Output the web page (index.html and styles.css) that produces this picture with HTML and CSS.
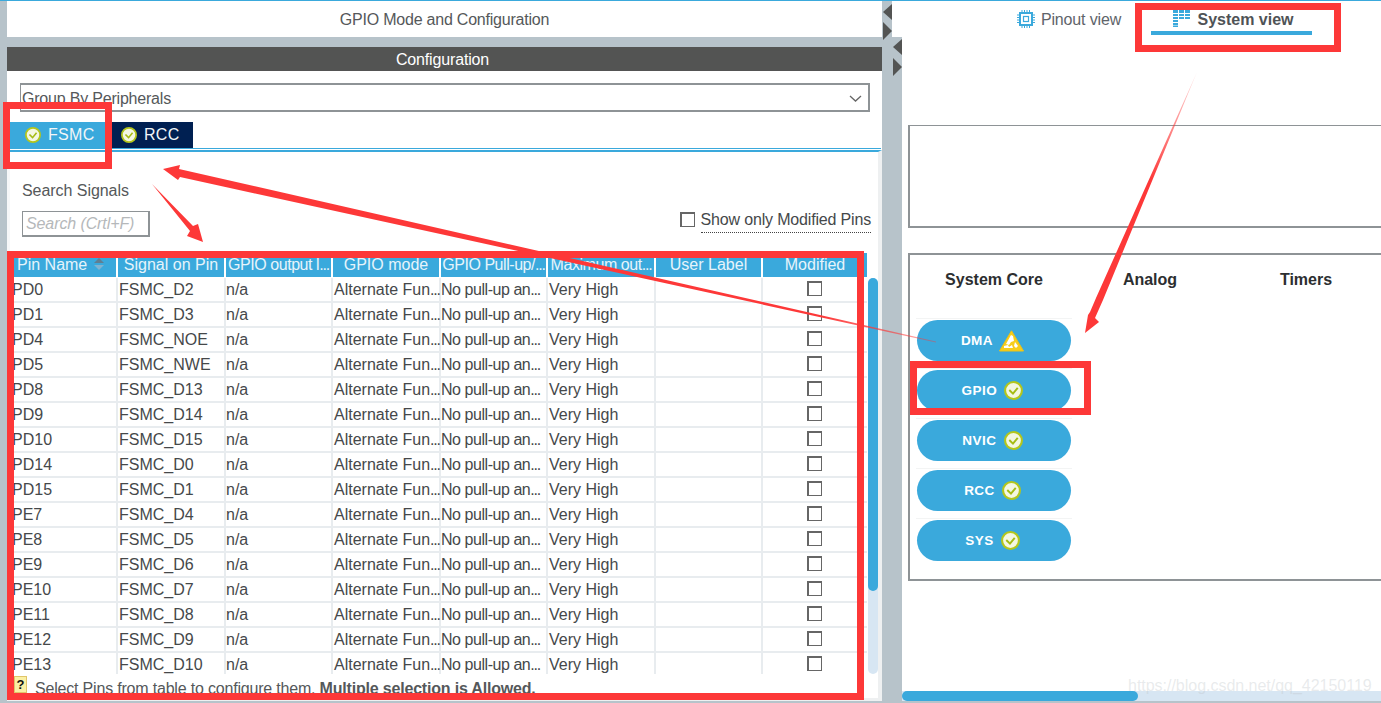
FILE: index.html
```html
<!DOCTYPE html>
<html lang="en">
<head>
<meta charset="utf-8">
<title>GPIO Mode and Configuration</title>
<link rel="stylesheet" href="styles.css">
</head>
<body>
<div class="app">
  <section class="left">
    <header class="mode-header">GPIO Mode and Configuration</header>
    <div class="config-title">Configuration</div>
    <div class="config-body">
      <div class="select">
        <span>Group By Peripherals</span>
        <svg class="chevron" width="13" height="7" viewBox="0 0 13 7"><path d="M1 1l5.500 5L12 1" fill="none" stroke="#666" stroke-width="1.300"/></svg>
      </div>
      <div class="tabs">
        <div class="tab tab-active">
          <svg class="check" viewBox="0 0 18 18"><circle cx="9" cy="9" r="8" fill="#f4f7e2" stroke="#b4c61c" stroke-width="2"/><path d="M5 8.500l3.500 3.500L13 6.500" fill="none" stroke="#a5bb14" stroke-width="1.800"/></svg>
          <span>FSMC</span>
        </div>
        <div class="tab tab-dark">
          <svg class="check" viewBox="0 0 18 18"><circle cx="9" cy="9" r="8" fill="#f4f7e2" stroke="#b4c61c" stroke-width="2"/><path d="M5 8.500l3.500 3.500L13 6.500" fill="none" stroke="#a5bb14" stroke-width="1.800"/></svg>
          <span>RCC</span>
        </div>
      </div>
      <div class="signals">
        <div class="search-row">
          <div class="search-col">
            <div class="search-label">Search Signals</div>
            <div class="search-input">Search (Crtl+F)</div>
          </div>
          <div class="modified-filter">
            <span class="checkbox"></span>
            <span class="modified-text">Show only Modified Pins</span>
          </div>
        </div>
        <div class="table-row">
          <div class="table-clip">
            <table class="pins">
              <colgroup>
                <col class="c107"><col class="c108"><col class="c107"><col class="c108"><col class="c107"><col class="c108"><col class="c107"><col class="c104">
              </colgroup>
              <thead>
                <tr>
                  <th class="th-first">Pin Name
                    <svg class="sort" width="12" height="14" viewBox="0 0 12 14"><path d="M6 1l5 5H1z" fill="#5f7f92"/><path d="M6 13l5-5H1z" fill="#7fb3d0"/></svg>
                  </th>
                  <th>Signal on Pin</th><th>GPIO output l<i class="dots">...</i></th><th>GPIO mode</th><th>GPIO Pull-up/<i class="dots">...</i></th><th>Maximum out<i class="dots">...</i></th><th>User Label</th><th>Modified</th>
                </tr>
              </thead>
              <tbody>
                <tr><td class="td-first">PD0</td><td>FSMC_D2</td><td>n/a</td><td>Alternate Fun<i class="dots">...</i></td><td>No pull-up an<i class="dots">...</i></td><td>Very High</td><td></td><td class="td-check"><span class="checkbox"></span></td></tr>
                <tr><td class="td-first">PD1</td><td>FSMC_D3</td><td>n/a</td><td>Alternate Fun<i class="dots">...</i></td><td>No pull-up an<i class="dots">...</i></td><td>Very High</td><td></td><td class="td-check"><span class="checkbox"></span></td></tr>
                <tr><td class="td-first">PD4</td><td>FSMC_NOE</td><td>n/a</td><td>Alternate Fun<i class="dots">...</i></td><td>No pull-up an<i class="dots">...</i></td><td>Very High</td><td></td><td class="td-check"><span class="checkbox"></span></td></tr>
                <tr><td class="td-first">PD5</td><td>FSMC_NWE</td><td>n/a</td><td>Alternate Fun<i class="dots">...</i></td><td>No pull-up an<i class="dots">...</i></td><td>Very High</td><td></td><td class="td-check"><span class="checkbox"></span></td></tr>
                <tr><td class="td-first">PD8</td><td>FSMC_D13</td><td>n/a</td><td>Alternate Fun<i class="dots">...</i></td><td>No pull-up an<i class="dots">...</i></td><td>Very High</td><td></td><td class="td-check"><span class="checkbox"></span></td></tr>
                <tr><td class="td-first">PD9</td><td>FSMC_D14</td><td>n/a</td><td>Alternate Fun<i class="dots">...</i></td><td>No pull-up an<i class="dots">...</i></td><td>Very High</td><td></td><td class="td-check"><span class="checkbox"></span></td></tr>
                <tr><td class="td-first">PD10</td><td>FSMC_D15</td><td>n/a</td><td>Alternate Fun<i class="dots">...</i></td><td>No pull-up an<i class="dots">...</i></td><td>Very High</td><td></td><td class="td-check"><span class="checkbox"></span></td></tr>
                <tr><td class="td-first">PD14</td><td>FSMC_D0</td><td>n/a</td><td>Alternate Fun<i class="dots">...</i></td><td>No pull-up an<i class="dots">...</i></td><td>Very High</td><td></td><td class="td-check"><span class="checkbox"></span></td></tr>
                <tr><td class="td-first">PD15</td><td>FSMC_D1</td><td>n/a</td><td>Alternate Fun<i class="dots">...</i></td><td>No pull-up an<i class="dots">...</i></td><td>Very High</td><td></td><td class="td-check"><span class="checkbox"></span></td></tr>
                <tr><td class="td-first">PE7</td><td>FSMC_D4</td><td>n/a</td><td>Alternate Fun<i class="dots">...</i></td><td>No pull-up an<i class="dots">...</i></td><td>Very High</td><td></td><td class="td-check"><span class="checkbox"></span></td></tr>
                <tr><td class="td-first">PE8</td><td>FSMC_D5</td><td>n/a</td><td>Alternate Fun<i class="dots">...</i></td><td>No pull-up an<i class="dots">...</i></td><td>Very High</td><td></td><td class="td-check"><span class="checkbox"></span></td></tr>
                <tr><td class="td-first">PE9</td><td>FSMC_D6</td><td>n/a</td><td>Alternate Fun<i class="dots">...</i></td><td>No pull-up an<i class="dots">...</i></td><td>Very High</td><td></td><td class="td-check"><span class="checkbox"></span></td></tr>
                <tr><td class="td-first">PE10</td><td>FSMC_D7</td><td>n/a</td><td>Alternate Fun<i class="dots">...</i></td><td>No pull-up an<i class="dots">...</i></td><td>Very High</td><td></td><td class="td-check"><span class="checkbox"></span></td></tr>
                <tr><td class="td-first">PE11</td><td>FSMC_D8</td><td>n/a</td><td>Alternate Fun<i class="dots">...</i></td><td>No pull-up an<i class="dots">...</i></td><td>Very High</td><td></td><td class="td-check"><span class="checkbox"></span></td></tr>
                <tr><td class="td-first">PE12</td><td>FSMC_D9</td><td>n/a</td><td>Alternate Fun<i class="dots">...</i></td><td>No pull-up an<i class="dots">...</i></td><td>Very High</td><td></td><td class="td-check"><span class="checkbox"></span></td></tr>
                <tr><td class="td-first">PE13</td><td>FSMC_D10</td><td>n/a</td><td>Alternate Fun<i class="dots">...</i></td><td>No pull-up an<i class="dots">...</i></td><td>Very High</td><td></td><td class="td-check"><span class="checkbox"></span></td></tr>
              </tbody>
            </table>
          </div>
          <div class="vscroll"><div class="vthumb"></div></div>
        </div>
        <div class="hint">
          <span class="hint-icon">?</span>
          <span class="hint-text">Select Pins from table to configure them. <b>Multiple selection is Allowed.</b></span>
        </div>
      </div>
    </div>
  </section>

  <section class="right">
    <nav class="views">
      <div class="view view-plain">
        <svg class="view-icon" width="18" height="18" viewBox="0 0 18 18"><g fill="none" stroke="#3aa9dc"><rect x="3" y="3" width="12" height="12" stroke-width="2"/><rect x="6.500" y="6.500" width="5" height="5" stroke-width="1.200"/><path d="M0 5h3M0 7.500h3M0 10h3M0 12.500h3M15 5h3M15 7.500h3M15 10h3M15 12.500h3M5 0v3M7.500 0v3M10 0v3M12.500 0v3M5 15v3M7.500 15v3M10 15v3M12.500 15v3" stroke-width="1"/></g></svg>
        <span>Pinout view</span>
      </div>
      <div class="view view-active">
        <svg class="view-icon" width="18" height="17" viewBox="0 0 18 17"><g fill="#3aa9dc"><rect x="0" y="0" width="5" height="3"/><rect x="6" y="0" width="5" height="3"/><rect x="12" y="0" width="5" height="3"/><rect x="0" y="4" width="5" height="2"/><rect x="6" y="4" width="5" height="2"/><rect x="12" y="4" width="5" height="2"/><rect x="0" y="7" width="5" height="2"/><rect x="6" y="7" width="5" height="2"/><rect x="12" y="7" width="5" height="2"/><rect x="0" y="10" width="5" height="2"/><rect x="0" y="13" width="5" height="2"/><rect x="0" y="15.500" width="5" height="1.500"/></g></svg>
        <span>System view</span>
      </div>
    </nav>
    <div class="system">
      <div class="empty-box"></div>
      <div class="categories">
        <div class="category">
          <h3 class="category-title">System Core</h3>
          <div class="pill-item"><div class="pill"><span>DMA</span>
            <svg class="warn" width="25" height="22" viewBox="0 0 25 22"><path d="M12.500.8L24.500 21H.5z" fill="#f6cd1c" stroke="#eec214" stroke-width="1"/><path d="M12 5l2 1 1 5-3 1-2 3-3-1zM5 16l4-1 1 2 3-2 1 3H5zM16 12l3 4-2 2-2-2z" fill="#fff"/></svg>
          </div></div>
          <div class="pill-item"><div class="pill"><span>GPIO</span>
            <svg class="check-lg" viewBox="0 0 18 18"><circle cx="9" cy="9" r="8" fill="#f4f7e2" stroke="#b4c61c" stroke-width="2"/><path d="M5 8.500l3.500 3.500L13 6.500" fill="none" stroke="#a5bb14" stroke-width="1.800"/></svg>
          </div></div>
          <div class="pill-item"><div class="pill"><span>NVIC</span>
            <svg class="check-lg" viewBox="0 0 18 18"><circle cx="9" cy="9" r="8" fill="#f4f7e2" stroke="#b4c61c" stroke-width="2"/><path d="M5 8.500l3.500 3.500L13 6.500" fill="none" stroke="#a5bb14" stroke-width="1.800"/></svg>
          </div></div>
          <div class="pill-item"><div class="pill"><span>RCC</span>
            <svg class="check-lg" viewBox="0 0 18 18"><circle cx="9" cy="9" r="8" fill="#f4f7e2" stroke="#b4c61c" stroke-width="2"/><path d="M5 8.500l3.500 3.500L13 6.500" fill="none" stroke="#a5bb14" stroke-width="1.800"/></svg>
          </div></div>
          <div class="pill-item"><div class="pill"><span>SYS</span>
            <svg class="check-lg" viewBox="0 0 18 18"><circle cx="9" cy="9" r="8" fill="#f4f7e2" stroke="#b4c61c" stroke-width="2"/><path d="M5 8.500l3.500 3.500L13 6.500" fill="none" stroke="#a5bb14" stroke-width="1.800"/></svg>
          </div></div>
        </div>
        <div class="category"><h3 class="category-title">Analog</h3></div>
        <div class="category"><h3 class="category-title">Timers</h3></div>
      </div>
      <div class="hscroll"><div class="hthumb"></div></div>
    </div>
  </section>

  <div class="splitter-arrows">
    <span class="tri tri-left tri-a"></span>
    <span class="tri tri-right tri-b"></span>
    <span class="tri tri-left tri-c"></span>
    <span class="tri tri-right tri-d"></span>
  </div>

  <svg class="annotations" width="1381" height="703" viewBox="0 0 1381 703">
    <defs>
      <linearGradient id="fadeA" gradientUnits="userSpaceOnUse" x1="820" y1="0" x2="936" y2="0">
        <stop offset="0" stop-color="#fd3838"/><stop offset="1" stop-color="#fd3838" stop-opacity=".4"/>
      </linearGradient>
      <linearGradient id="fadeB" gradientUnits="userSpaceOnUse" x1="0" y1="180" x2="0" y2="72">
        <stop offset="0" stop-color="#fd3838"/><stop offset="1" stop-color="#fd3838" stop-opacity=".15"/>
      </linearGradient>
    </defs>
    <g fill="none" stroke="#fd3838" stroke-width="7">
      <rect x="6.500" y="105.500" width="102" height="60"/>
      <rect x="10.500" y="254.500" width="850" height="442"/>
      <rect x="913.500" y="364.500" width="174" height="47"/>
      <rect x="1138.500" y="6.500" width="199" height="42"/>
    </g>
    <polygon points="163,169 180,165 179,169 936,341.500 936,342.500 180,177 178,180" fill="url(#fadeA)"/>
    <polygon points="152,184 193,226 198,224 203,242 187,236 190,231" fill="#fd3838"/>
    <polygon points="1197,72 1103,300 1095,318 1099,322 1085,333 1088,315 1090,312 1096,298" fill="url(#fadeB)"/>
  </svg>

  <div class="watermark">https://blog.csdn.net/qq_42150119</div>
</div>
</body>
</html>
```

FILE: styles.css
```css
* { box-sizing: border-box; }

html, body {
  margin: 0;
  padding: 0;
  overflow: hidden;
}

body {
  font-family: "Liberation Sans", Arial, sans-serif;
  font-size: 16px;
  color: #4a4c4d;
}

.app {
  position: relative;
  display: flex;
  justify-content: space-between;
  width: 1381px;
  height: 703px;
  overflow: hidden;
  background: #b7c3ca;
  border-top: 1px solid #3aa9dc;
}

/* left column */
.left {
  display: flex;
  flex-direction: column;
  width: 882px;
  padding-left: 7px;
}

.mode-header {
  height: 36px;
  padding-top: 1px;
  line-height: 36px;
  text-align: center;
  background: #fff;
  color: #55585a;
  letter-spacing: -.22px;
}

.config-title {
  height: 24px;
  padding: 1px 4px 0 0;
  line-height: 24px;
  margin-top: 10px;
  text-align: center;
  color: #fff;
  background: #535453;
  letter-spacing: -.15px;
}

.config-body {
  flex: 1;
  margin-bottom: 2px;
  padding-top: 12px;
  background: #fff;
  display: flex;
  flex-direction: column;
  min-height: 0;
}

.select {
  display: flex;
  align-items: center;
  justify-content: space-between;
  height: 29px;
  margin: 0 12px 0 13px;
  padding: 2px 6px 0 1px;
  border: 2px solid #8e9396;
  border-left-width: 1px;
  color: #55585a;
  letter-spacing: -.2px;
}

.tabs {
  display: flex;
  height: 27px;
  margin: 10px 1px 0 3px;
  border-bottom: 1px solid #3aa9dc;
}

.tab {
  display: flex;
  align-items: center;
  gap: 7px;
  height: 26px;
  padding: 0 13px 0 15px;
  color: #f2f6f8;
  letter-spacing: .3px;
}

.tab-active { background: #3aa9dc; width: 96px; padding-right: 0; }
.tab-dark { background: #002052; }

.check { flex: none; width: 16px; height: 16px; }
.check-lg { flex: none; width: 19px; height: 19px; }

.signals {
  flex: 1;
  min-height: 0;
  display: flex;
  flex-direction: column;
  margin-top: 1px;
  border-top: 2px solid #3aa9dc;
  border-left: 3px solid #f6f7f8;
  border-right: 4px solid #eef0f1;
  border-bottom: 3px solid #eef0f1;
}

.search-row {
  display: flex;
  justify-content: space-between;
  align-items: flex-end;
  height: 85px;
  padding: 29px 7px 0 12px;
}

.search-label {
  height: 20px;
  line-height: 20px;
  color: #55585a;
  letter-spacing: -.05px;
}

.search-input {
  width: 128px;
  height: 26px;
  line-height: 24px;
  margin-top: 10px;
  padding-left: 3px;
  border: 1px solid #8e9396;
  border-width: 1px 2px 2px 1px;
  color: #b5b8ba;
  font-style: italic;
  letter-spacing: -.1px;
}

.modified-filter {
  display: flex;
  align-items: flex-start;
  gap: 6px;
  height: 26px;
  color: #45484a;
  letter-spacing: -.17px;
}

.modified-text {
  height: 22px;
  line-height: 18px;
  border-bottom: 1px dotted #444;
}

.checkbox {
  display: inline-block;
  width: 15px;
  height: 15px;
  background: #fff;
  border: 1px solid #666;
  border-width: 2px 1px 1px 2px;
}

.modified-filter .checkbox { margin-top: 1px; }

.table-row {
  display: flex;
  margin-top: 16px;
  height: 421px;
  padding-left: 1px;
}

.table-clip {
  width: 857px;
  height: 421px;
  overflow: hidden;
}

.vscroll {
  width: 10px;
  margin: 25px 0 0 0;
  background: #d7e6f3;
  border-radius: 5px;
}

.vthumb {
  height: 313px;
  background: #3aa9dc;
  border-radius: 5px;
}

.pins {
  width: 856px;
  table-layout: fixed;
  border-collapse: separate;
  border-spacing: 0;
  font-size: 16px;
}

.c107 { width: 107px; }
.c108 { width: 108px; }
.c104 { width: 104px; }

.dots {
  font-style: normal;
  letter-spacing: -1.200px;
}

.pins th {
  position: relative;
  height: 25px;
  padding: 0;
  font-weight: normal;
  white-space: nowrap;
  text-align: center;
  color: #e6f4fb;
  background: #3aa9dc;
  border-right: 2px solid #fff;
  border-bottom: 1px solid #fff;
}

.pins th:last-child { border-right: none; }
.pins th:nth-child(3),
.pins th:nth-child(5),
.pins th:nth-child(6) { letter-spacing: -.45px; }

.pins .th-first {
  text-align: left;
  padding-left: 6px;
}

.sort {
  position: absolute;
  right: 11px;
  top: 4px;
}

.pins td {
  height: 25px;
  padding: 0 0 0 1px;
  white-space: nowrap;
  color: #45484a;
  border-right: 2px solid #e8ecef;
  border-bottom: 2px solid #e8ecef;
}

.pins td:last-child { border-right: none; }
.pins td:nth-child(3) { padding-left: 0; }
.pins td:nth-child(5) { padding-left: 0; letter-spacing: -.45px; }
.pins .td-first { padding-left: 1px; }
.pins .td-check { padding: 0 0 3px; text-align: center; line-height: 0; }
.pins .td-check .checkbox { margin-right: 2px; }

.hint {
  display: flex;
  align-items: flex-start;
  gap: 8px;
  flex: 1;
  min-height: 0;
  overflow: hidden;
  padding: 2px 0 0 4px;
  color: #55585a;
  line-height: 24px;
  letter-spacing: -.19px;
}

.hint-text { margin-top: 1px; }

.hint-icon {
  flex: none;
  width: 13px;
  height: 17px;
  line-height: 15px;
  text-align: center;
  font-size: 13px;
  font-weight: bold;
  color: #111;
  background: #fbf0a4;
  border: 1px solid #e0c56a;
}

/* right column */
.right {
  display: flex;
  flex-direction: column;
  width: 489px;
  height: 700px;
}

.views {
  display: flex;
  height: 36px;
  padding-left: 98px;
  background: #fff;
}

.view {
  display: flex;
  align-items: flex-start;
  justify-content: center;
  gap: 6px;
  width: 161px;
  height: 34px;
  padding-top: 10px;
  line-height: 18px;
  color: #60646a;
}

.view-plain { padding-right: 3px; letter-spacing: -.15px; }
.view-icon { margin-top: -1px; }

.view-active {
  padding-left: 4px;
  font-weight: bold;
  color: #4f5356;
  border-bottom: 4px solid #3aa9dc;
}

.system {
  flex: 1;
  display: flex;
  flex-direction: column;
  margin-left: 10px;
  padding-left: 6px;
  background: #fff;
  position: relative;
}

.empty-box {
  height: 103px;
  margin-top: 88px;
  border: 2px solid #8e9396;
  border-width: 1px 0 2px 2px;
}

.categories {
  display: flex;
  height: 328px;
  margin-top: 25px;
  padding-left: 6px;
  border: 2px solid #8e9396;
  border-width: 2px 0 2px 2px;
}

.category { width: 156px; flex: none; }

.category-title {
  margin: 15px 0 28px;
  height: 20px;
  line-height: 20px;
  text-align: center;
  font-size: 16px;
  font-weight: bold;
  color: #2c2e30;
}

.pill-item {
  height: 50px;
  padding: 1px 1px 7px;
  border-top: 1px solid #f3f4f4;
}

.pill {
  display: flex;
  align-items: center;
  justify-content: center;
  gap: 7px;
  height: 41px;
  padding-right: 3px;
  border-radius: 21px;
  background: #3aa9dc;
  color: #fff;
  font-size: 13.500px;
  font-weight: bold;
  letter-spacing: .5px;
}

.warn { flex: none; margin-left: -1px; }

.hscroll {
  margin: auto 0 0 -6px;
  height: 10px;
  background: #d7e6f3;
}

.hthumb {
  width: 236px;
  height: 10px;
  background: #3aa9dc;
  border-radius: 5px;
}

/* overlays */
.splitter-arrows {
  position: absolute;
  left: 0;
  top: 0;
}

.tri {
  position: absolute;
  width: 0;
  height: 0;
  border-style: solid;
  border-color: transparent;
}

.tri-left { border-width: 8px 9px 8px 0; border-right-color: #535453; }
.tri-right { border-width: 9px 0 9px 9px; border-left-color: #535453; }
.tri-a { left: 883px; top: 3px; }
.tri-b { left: 883px; top: 21px; }
.tri-c { left: 893px; top: 38px; }
.tri-d { left: 893px; top: 57px; }

.annotations {
  position: absolute;
  left: 0;
  top: -1px;
}

.watermark {
  position: absolute;
  left: 1128px;
  top: 676px;
  font-size: 16px;
  letter-spacing: -.02px;
  color: rgba(190, 195, 200, .35);
}
```
